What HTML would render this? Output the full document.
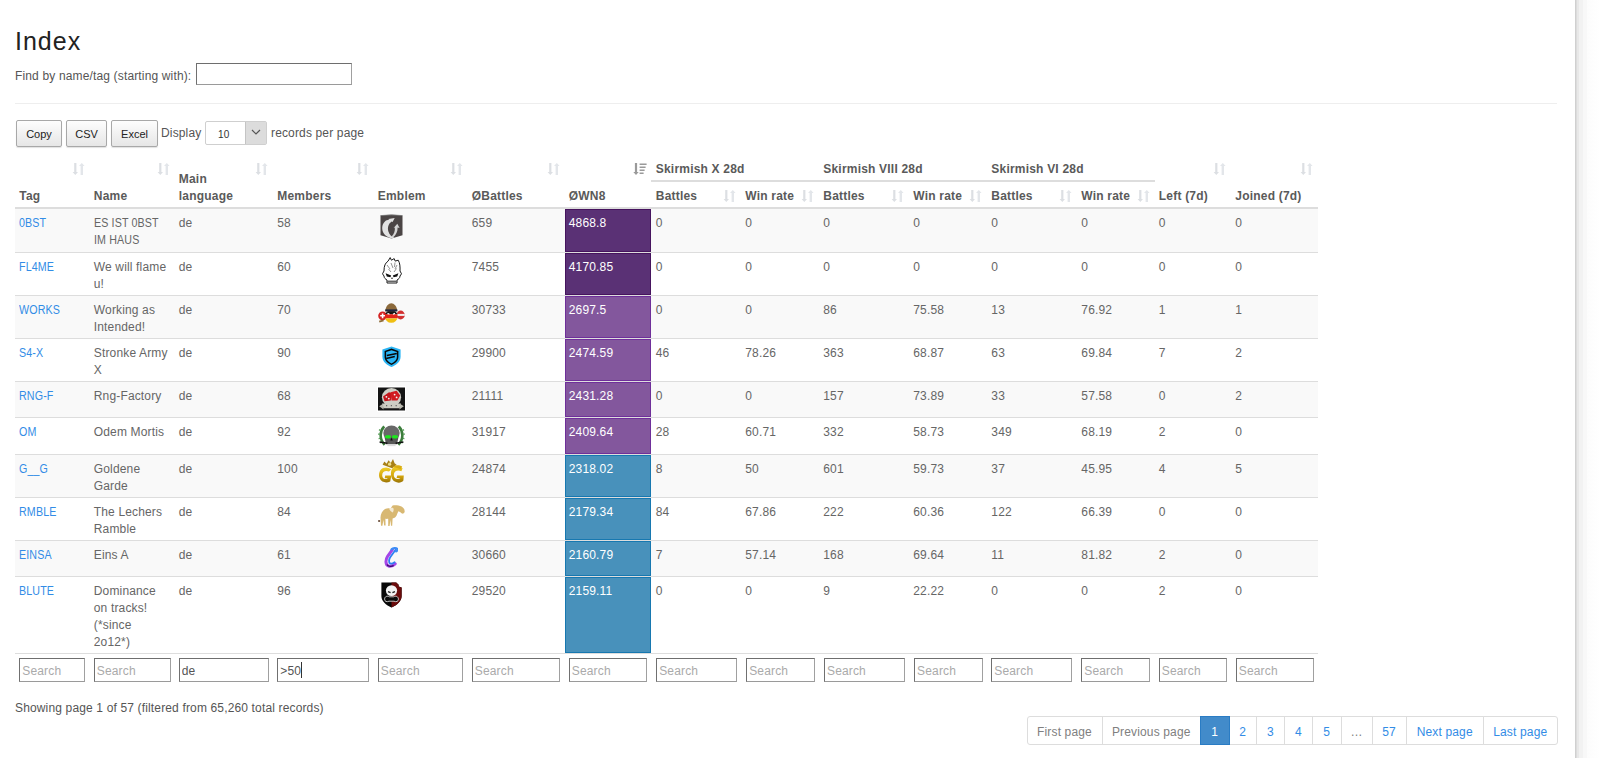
<!DOCTYPE html>
<html><head><meta charset="utf-8"><title>Index</title>
<style>
html,body{margin:0;padding:0;background:#fff;}
body{width:1600px;height:758px;overflow:hidden;position:relative;font-family:"Liberation Sans",sans-serif;font-size:12px;color:#555;letter-spacing:.15px;}
.shadow{position:absolute;left:1575px;top:0;width:25px;height:758px;background:linear-gradient(to right,#d0d0d0 0,#d0d0d0 1px,#dcdcdc 1px,#dcdcdc 2px,#e8e8e8 2px,#e8e8e8 4px,#f2f2f2 4px,#f2f2f2 8px,#f8f8f8 8px,#f8f8f8 12px,#fcfcfc 12px,#fefefe 20px,#fff 25px);}
h1{position:absolute;left:15px;top:25px;margin:0;font-weight:normal;font-size:25px;line-height:32px;color:#222;letter-spacing:1px;}
.find{position:absolute;left:15px;top:68px;line-height:17px;}
.find input{position:absolute;left:181px;top:-5px;width:156px;height:22px;}
input{box-sizing:border-box;margin:0;padding:2px 2px 0;font-family:"Liberation Sans",sans-serif;font-size:12px;letter-spacing:.15px;border:1px solid #8a8a8a;border-top-color:#6e6e6e;border-left-color:#707070;border-bottom-color:#9a9a9a;border-right-color:#a0a0a0;background:#fff;color:#555;outline:none;}
input::placeholder{color:#aaa;}
hr{position:absolute;left:15px;top:103px;width:1542px;height:0;margin:0;border:0;border-top:1px solid #eee;}
.btn{position:absolute;top:120px;height:26.5px;box-sizing:border-box;border:1px solid #a8a8a8;border-radius:2px;background:linear-gradient(#fdfdfd,#e6e6e6);font-size:11px;line-height:26px;text-align:center;color:#222;letter-spacing:0;box-shadow:0 1px 1px rgba(0,0,0,.12);}
.disp{position:absolute;top:125px;line-height:17px;}
.sel{position:absolute;left:205px;top:121px;width:62px;height:24px;box-sizing:border-box;border:1px solid #cfcfcf;border-radius:2px;background:#fff;}
.sel .v{position:absolute;left:12px;top:6px;font-size:10px;line-height:14px;color:#333;}
.sel .ar{position:absolute;right:0;top:0;width:20px;height:22px;background:#dcdcdc;border-left:1px solid #c4c4c4;}
table{position:absolute;left:15.3px;top:156px;border-collapse:separate;border-spacing:0;table-layout:fixed;width:1302.5px;}
th,td{padding:0 4px;line-height:17px;text-align:left;overflow:visible;white-space:nowrap;}
th{font-weight:bold;color:#5a5a5a;position:relative;letter-spacing:.2px;}
th.r1{height:19px;padding-top:5px;vertical-align:top;}
th.grp{border-bottom:2px solid #ddd;}
th.r2{height:19px;padding-top:6px;vertical-align:top;border-bottom:2px solid #ddd;}
th.rs{vertical-align:bottom;padding-bottom:2px;border-bottom:2px solid #ddd;}
.si{position:absolute;right:5px;top:7px;}
th.r2 .si{top:8px;}
th.wnh .si{right:3.5px;}
th.b1,td.b1{padding-left:5px;}
.caps{display:inline-block;transform:scaleX(.89);transform-origin:0 0;}
td{vertical-align:top;border-top:1px solid #ddd;padding-top:5.5px;color:#666;}
tbody tr:first-child td{border-top:0;}
tbody tr:nth-child(odd) td{background:#f9f9f9;}
td a{color:#328ce6;text-decoration:none;}
td.wn{color:#fff;}
tbody tr td.sup{background:#5a3175;box-shadow:inset 0 0 0 1px #46145e;}
tbody tr td.uni{background:#83579d;box-shadow:inset 0 0 0 1px #6f2f9a;}
tbody tr td.gr{background:#4891bb;box-shadow:inset 0 0 0 1px #1778b0;}
.emb{position:absolute;}
tfoot td{border-top:1px solid #ddd;background:#fff !important;padding-top:4px;height:32px;box-sizing:border-box;}
tfoot input{height:24px;display:block;}
.info{position:absolute;left:15px;top:700px;line-height:17px;}
.pg{position:absolute;left:0;top:716px;height:29px;}
.pg span{position:absolute;top:0;box-sizing:border-box;height:29px;line-height:31px;border:1px solid #ddd;text-align:center;color:#328ce6;background:#fff;}
.pg span.dis{color:#808080;}
.pg span.act{background:#428bca;border-color:#2a7cc4;color:#fff;z-index:2;}
.pg span:first-child{border-radius:3px 0 0 3px;}
.pg span:last-child{border-radius:0 3px 3px 0;}
</style></head><body>
<div class="shadow"></div>
<h1>Index</h1>
<div class="find">Find by name/tag (starting with): <input type="text"></div>
<hr>
<div class="btn" style="left:16px;width:46px">Copy</div>
<div class="btn" style="left:66px;width:41px">CSV</div>
<div class="btn" style="left:111px;width:47px">Excel</div>
<div class="disp" style="left:161px">Display</div>
<div class="sel"><span class="v">10</span><span class="ar"><svg width="20" height="21" viewBox="0 0 20 21"><path d="M6 8l4 4 4-4" stroke="#555" stroke-width="1.2" fill="none"/></svg></span></div>
<div class="disp" style="left:271px">records per page</div>

<table><colgroup><col style="width:74.5px"><col style="width:85px"><col style="width:98.5px"><col style="width:100.5px"><col style="width:94px"><col style="width:97px"><col style="width:86px"><col style="width:90.5px"><col style="width:78px"><col style="width:90px"><col style="width:78px"><col style="width:90px"><col style="width:77.5px"><col style="width:76.5px"><col style="width:86.5px"></colgroup>
<thead><tr>
<th class="rs" rowspan="2"><svg class="si" width="13" height="12" viewBox="0 0 13 12"><path d="M2.2 0h2.2v9h1.6L3.3 12 .6 9h1.6z" fill="#dcdfe3"/><path d="M8.6 3H7l2.8-3 2.8 3H11v9H8.6z" fill="#e3e6ea"/></svg>Tag</th>
<th class="rs" rowspan="2"><svg class="si" width="13" height="12" viewBox="0 0 13 12"><path d="M2.2 0h2.2v9h1.6L3.3 12 .6 9h1.6z" fill="#dcdfe3"/><path d="M8.6 3H7l2.8-3 2.8 3H11v9H8.6z" fill="#e3e6ea"/></svg>Name</th>
<th class="rs" rowspan="2"><svg class="si" width="13" height="12" viewBox="0 0 13 12"><path d="M2.2 0h2.2v9h1.6L3.3 12 .6 9h1.6z" fill="#dcdfe3"/><path d="M8.6 3H7l2.8-3 2.8 3H11v9H8.6z" fill="#e3e6ea"/></svg>Main<br>language</th>
<th class="rs" rowspan="2"><svg class="si" width="13" height="12" viewBox="0 0 13 12"><path d="M2.2 0h2.2v9h1.6L3.3 12 .6 9h1.6z" fill="#dcdfe3"/><path d="M8.6 3H7l2.8-3 2.8 3H11v9H8.6z" fill="#e3e6ea"/></svg>Members</th>
<th class="rs" rowspan="2"><svg class="si" width="13" height="12" viewBox="0 0 13 12"><path d="M2.2 0h2.2v9h1.6L3.3 12 .6 9h1.6z" fill="#dcdfe3"/><path d="M8.6 3H7l2.8-3 2.8 3H11v9H8.6z" fill="#e3e6ea"/></svg>Emblem</th>
<th class="rs" rowspan="2"><svg class="si" width="13" height="12" viewBox="0 0 13 12"><path d="M2.2 0h2.2v9h1.6L3.3 12 .6 9h1.6z" fill="#dcdfe3"/><path d="M8.6 3H7l2.8-3 2.8 3H11v9H8.6z" fill="#e3e6ea"/></svg>ØBattles</th>
<th class="rs wnh" rowspan="2"><svg class="si" width="14" height="12" viewBox="0 0 14 12"><path d="M1.9 0h2.2v9h1.6L3 12 .3 9h1.6z" fill="#9a9a9a"/><path d="M6.6 0.4h7v1.5h-7zM6.6 3.4h6v1.5h-6zM6.6 6.4h5v1.5h-5zM6.6 9.4h4v1.5h-4z" fill="#9a9a9a"/></svg>ØWN8</th>
<th class="r1 grp b1" colspan="2">Skirmish X 28d</th>
<th class="r1 grp" colspan="2">Skirmish VIII 28d</th>
<th class="r1 grp" colspan="2">Skirmish VI 28d</th>
<th class="rs" rowspan="2"><svg class="si" width="13" height="12" viewBox="0 0 13 12"><path d="M2.2 0h2.2v9h1.6L3.3 12 .6 9h1.6z" fill="#dcdfe3"/><path d="M8.6 3H7l2.8-3 2.8 3H11v9H8.6z" fill="#e3e6ea"/></svg>Left (7d)</th>
<th class="rs" rowspan="2"><svg class="si" width="13" height="12" viewBox="0 0 13 12"><path d="M2.2 0h2.2v9h1.6L3.3 12 .6 9h1.6z" fill="#dcdfe3"/><path d="M8.6 3H7l2.8-3 2.8 3H11v9H8.6z" fill="#e3e6ea"/></svg>Joined (7d)</th>
</tr><tr>
<th class="r2 b1"><svg class="si" width="13" height="12" viewBox="0 0 13 12"><path d="M2.2 0h2.2v9h1.6L3.3 12 .6 9h1.6z" fill="#dcdfe3"/><path d="M8.6 3H7l2.8-3 2.8 3H11v9H8.6z" fill="#e3e6ea"/></svg>Battles</th><th class="r2"><svg class="si" width="13" height="12" viewBox="0 0 13 12"><path d="M2.2 0h2.2v9h1.6L3.3 12 .6 9h1.6z" fill="#dcdfe3"/><path d="M8.6 3H7l2.8-3 2.8 3H11v9H8.6z" fill="#e3e6ea"/></svg>Win rate</th>
<th class="r2"><svg class="si" width="13" height="12" viewBox="0 0 13 12"><path d="M2.2 0h2.2v9h1.6L3.3 12 .6 9h1.6z" fill="#dcdfe3"/><path d="M8.6 3H7l2.8-3 2.8 3H11v9H8.6z" fill="#e3e6ea"/></svg>Battles</th><th class="r2"><svg class="si" width="13" height="12" viewBox="0 0 13 12"><path d="M2.2 0h2.2v9h1.6L3.3 12 .6 9h1.6z" fill="#dcdfe3"/><path d="M8.6 3H7l2.8-3 2.8 3H11v9H8.6z" fill="#e3e6ea"/></svg>Win rate</th>
<th class="r2"><svg class="si" width="13" height="12" viewBox="0 0 13 12"><path d="M2.2 0h2.2v9h1.6L3.3 12 .6 9h1.6z" fill="#dcdfe3"/><path d="M8.6 3H7l2.8-3 2.8 3H11v9H8.6z" fill="#e3e6ea"/></svg>Battles</th><th class="r2"><svg class="si" width="13" height="12" viewBox="0 0 13 12"><path d="M2.2 0h2.2v9h1.6L3.3 12 .6 9h1.6z" fill="#dcdfe3"/><path d="M8.6 3H7l2.8-3 2.8 3H11v9H8.6z" fill="#e3e6ea"/></svg>Win rate</th>
</tr></thead><tbody>
<tr style="height:43px"><td><a class="caps">0BST</a></td><td><span class="caps">ES IST 0BST</span><br><span class="caps">IM HAUS</span></td><td>de</td><td>58</td><td class="em"></td><td>659</td><td class="wn sup">4868.8</td><td class="b1">0</td><td>0</td><td>0</td><td>0</td><td>0</td><td>0</td><td>0</td><td>0</td></tr>
<tr style="height:43px"><td><a class="caps">FL4ME</a></td><td>We will flame<br>u!</td><td>de</td><td>60</td><td class="em"></td><td>7455</td><td class="wn sup">4170.85</td><td class="b1">0</td><td>0</td><td>0</td><td>0</td><td>0</td><td>0</td><td>0</td><td>0</td></tr>
<tr style="height:43px"><td><a class="caps">WORKS</a></td><td>Working as<br>Intended!</td><td>de</td><td>70</td><td class="em"></td><td>30733</td><td class="wn uni">2697.5</td><td class="b1">0</td><td>0</td><td>86</td><td>75.58</td><td>13</td><td>76.92</td><td>1</td><td>1</td></tr>
<tr style="height:43px"><td><a class="caps">S4-X</a></td><td>Stronke Army<br>X</td><td>de</td><td>90</td><td class="em"></td><td>29900</td><td class="wn uni">2474.59</td><td class="b1">46</td><td>78.26</td><td>363</td><td>68.87</td><td>63</td><td>69.84</td><td>7</td><td>2</td></tr>
<tr style="height:36px"><td><a class="caps">RNG-F</a></td><td>Rng-Factory</td><td>de</td><td>68</td><td class="em"></td><td>21111</td><td class="wn uni">2431.28</td><td class="b1">0</td><td>0</td><td>157</td><td>73.89</td><td>33</td><td>57.58</td><td>0</td><td>2</td></tr>
<tr style="height:37px"><td><a class="caps">OM</a></td><td>Odem Mortis</td><td>de</td><td>92</td><td class="em"></td><td>31917</td><td class="wn uni">2409.64</td><td class="b1">28</td><td>60.71</td><td>332</td><td>58.73</td><td>349</td><td>68.19</td><td>2</td><td>0</td></tr>
<tr style="height:43px"><td><a class="caps">G__G</a></td><td>Goldene<br>Garde</td><td>de</td><td>100</td><td class="em"></td><td>24874</td><td class="wn gr">2318.02</td><td class="b1">8</td><td>50</td><td>601</td><td>59.73</td><td>37</td><td>45.95</td><td>4</td><td>5</td></tr>
<tr style="height:43px"><td><a class="caps">RMBLE</a></td><td>The Lechers<br>Ramble</td><td>de</td><td>84</td><td class="em"></td><td>28144</td><td class="wn gr">2179.34</td><td class="b1">84</td><td>67.86</td><td>222</td><td>60.36</td><td>122</td><td>66.39</td><td>0</td><td>0</td></tr>
<tr style="height:36px"><td><a class="caps">EINSA</a></td><td>Eins A</td><td>de</td><td>61</td><td class="em"></td><td>30660</td><td class="wn gr">2160.79</td><td class="b1">7</td><td>57.14</td><td>168</td><td>69.64</td><td>11</td><td>81.82</td><td>2</td><td>0</td></tr>
<tr style="height:77px"><td><a class="caps">BLUTE</a></td><td>Dominance<br>on tracks!<br>(*since<br>2o12*)</td><td>de</td><td>96</td><td class="em"></td><td>29520</td><td class="wn gr">2159.11</td><td class="b1">0</td><td>0</td><td>9</td><td>22.22</td><td>0</td><td>0</td><td>2</td><td>0</td></tr>
</tbody><tfoot><tr>
<td><input type="text" style="width:66px;margin-left:0px" placeholder="Search"></td>
<td><input type="text" style="width:77px;margin-left:0px" placeholder="Search"></td>
<td><input type="text" style="width:90px;margin-left:0px" value="de"></td>
<td><input type="text" style="width:92px;margin-left:0px" value=">50"></td>
<td><input type="text" style="width:85px;margin-left:0px" placeholder="Search"></td>
<td><input type="text" style="width:88px;margin-left:0px" placeholder="Search"></td>
<td><input type="text" style="width:78px;margin-left:0px" placeholder="Search"></td>
<td><input type="text" style="width:81px;margin-left:1.4px" placeholder="Search"></td>
<td><input type="text" style="width:69px;margin-left:0.9px" placeholder="Search"></td>
<td><input type="text" style="width:81px;margin-left:0.7px" placeholder="Search"></td>
<td><input type="text" style="width:69px;margin-left:0.8px" placeholder="Search"></td>
<td><input type="text" style="width:81px;margin-left:0px" placeholder="Search"></td>
<td><input type="text" style="width:69px;margin-left:0px" placeholder="Search"></td>
<td><input type="text" style="width:68px;margin-left:0px" placeholder="Search"></td>
<td><input type="text" style="width:78px;margin-left:0.5px" placeholder="Search"></td>
</tr></tfoot></table>
<svg class="emb" style="left:380px;top:214px" width="23" height="25" viewBox="0 0 23 25"><path d="M0.5 1.6Q11.5 0 22.5 1.6V21.2L11.5 24.6 0.5 21.2z" fill="#4b4545"/><path d="M0.6 1.6Q11.5 0.2 22.4 1.6" stroke="#777" stroke-width=".8" fill="none"/><path d="M9.4 5.6L8.4 5 14.7 3.9 12.6 8.1 11.6 7.4C8.6 9.6 7.2 13 8.4 17.4 9.4 20.6 11.6 22.6 14.2 23.4L12.4 24.4C9 24 5 22 3 18 1.4 14 2.2 9.4 6 6.6z" fill="#e2e2e2"/><path d="M17.3 9.7L19.6 14 17.6 13.6C17.8 17.6 16 21 13 23.6L11.6 22.6C14.2 20 15.2 17 14.8 13.6L13.6 14z" fill="#d4d4d4"/></svg>
<svg class="emb" style="left:382px;top:257px" width="20" height="27" viewBox="0 0 20 27"><path d="M6 4.2L8.2 0.6 9.4 3.2 12.2 1.6 13.2 4.1 16.2 3.2C18 6 18.2 10 18 14L19.5 16.8 18 19C18 21 16.5 22.2 15 23V26H5V23C3.5 22.2 2 21 2 19L0.5 16.8 2 14C2 9 3.2 6 6 4.2z" fill="#fff" stroke="#1a1a1a" stroke-width="1"/><path d="M5 8L8 12M9 6L11 11M13 5.5L12.5 10M15 8L13 12M6.5 12L9 15M14.5 11.5L12 15" stroke="#777" stroke-width=".8"/><path d="M3.6 16.2L9.2 18.4 8.4 20.2 4.8 19.6zM16.4 16.2L10.8 18.4 11.6 20.2 15.2 19.6z" fill="#111"/><circle cx="10" cy="21.2" r=".8" fill="#222"/><path d="M5.5 24.2H14.5" stroke="#222" stroke-width="1"/></svg>
<svg class="emb" style="left:378px;top:303px" width="27" height="20" viewBox="0 0 27 20"><circle cx="4.6" cy="12.8" r="4.4" fill="#d42424"/><path d="M2.2 12.8H7M4.6 10.4V15.2" stroke="#fff" stroke-width="1.6"/><ellipse cx="22.6" cy="12" rx="4.2" ry="4.4" fill="#d23030"/><path d="M18.6 11.9H26.8" stroke="#f2f2f2" stroke-width="2"/><clipPath id="c3"><circle cx="13.3" cy="13.4" r="6.4"/></clipPath><g clip-path="url(#c3)"><rect x="6" y="6" width="15" height="5.2" fill="#151515"/><rect x="6" y="11.2" width="15" height="4.2" fill="#e0251b"/><rect x="6" y="15.4" width="15" height="6" fill="#f0bf12"/></g><path d="M7.2 8.2C7.8 3 10.6 0.3 13.3 0.3 16 0.3 18.8 3 19.4 8.2z" fill="#8c6a3c"/><rect x="7.3" y="6.4" width="12" height="2" fill="#1e2440"/><path d="M9.5 10.4l2 .8M17 10.4l-2 .8" stroke="#fff" stroke-width="1.2"/><path d="M1.2 18.6L5.6 17.4" stroke="#8e6b38" stroke-width="1.8"/></svg>
<svg class="emb" style="left:382px;top:346px" width="19" height="21" viewBox="0 0 19 21"><path d="M9.5 0.4L18.6 3.4V10.8C18.6 15.8 14.2 19 9.5 21 4.8 19 0.4 15.8 0.4 10.8V3.4z" fill="#2ab5f5"/><path d="M9.5 2.6L16.4 5V10.8C16.4 14.7 13.2 17.4 9.5 19 5.8 17.4 2.6 14.7 2.6 10.8V5z" fill="#080808"/><path d="M9.5 4.2L14.9 6.1V10.8C14.9 13.9 12.5 16 9.5 17.4 6.5 16 4.1 13.9 4.1 10.8V6.1z" fill="#2ab5f5"/><path d="M4.8 9.6L14.8 7.4M4.2 12.6L12.8 10.6" stroke="#080808" stroke-width="1.5"/></svg>
<svg class="emb" style="left:377px;top:386px" width="29" height="26" viewBox="0 0 29 26"><rect width="29" height="26" fill="#fff"/><rect x="1" y="1.5" width="27" height="23" fill="#141414"/><ellipse cx="14.5" cy="11.2" rx="9.6" ry="9.2" fill="#cfcec6"/><path d="M6 10.5L12 6.2 15.5 7.2 13.8 14.5 7.6 15.2z" fill="#c4161c"/><path d="M13.5 6.3L19.6 4.8 23.2 9.6 20.4 14.6 14.6 14.4z" fill="#d11a20"/><circle cx="9.4" cy="10.8" r=".9" fill="#f4f4f4"/><circle cx="11.8" cy="12.6" r=".9" fill="#f4f4f4"/><circle cx="17.6" cy="8.6" r=".9" fill="#f4f4f4"/><circle cx="19.6" cy="11.4" r=".9" fill="#f4f4f4"/><path d="M5 17.6H24L22.6 22.2H6.4z" fill="#cdccc2"/><path d="M2.2 20.2L6 17.8 6.6 23.4zM26.8 20.2L23 17.8 22.4 23.4z" fill="#b9b8ae"/><path d="M9 19.6h1.2M13.8 19.6h1.2M18.6 19.6h1.2" stroke="#666" stroke-width="1.2"/></svg>
<svg class="emb" style="left:378px;top:424px" width="27" height="24" viewBox="0 0 27 24"><path d="M6.2 2.4C1.6 7.4 1.2 15 6.6 20.8M20.8 2.4C25.4 7.4 25.8 15 20.4 20.8" stroke="#3c7d3c" stroke-width="2.6" fill="none"/><path d="M2.6 6.6l-1.6-1M1.8 10.4l-1.6-.4M2.2 14.4L.6 14.6M3.8 17.8l-1.6 1M24.4 6.6l1.6-1M25.2 10.4l1.6-.4M24.8 14.4l1.6.2M23.2 17.8l1.6 1" stroke="#5aa05a" stroke-width="1.4"/><ellipse cx="13.5" cy="9" rx="8.2" ry="7.6" fill="#686868"/><path d="M6.4 12.5H20.6L19 20.2H8z" fill="#575757"/><ellipse cx="10" cy="12.8" rx="3.1" ry="1.8" fill="#1ee51e"/><ellipse cx="17" cy="12.8" rx="3.1" ry="1.8" fill="#1ee51e"/><path d="M13.5 13.8L12.2 16.4H14.8z" fill="#0c0c0c"/><path d="M1.6 18L9.4 19.2M25.4 18L17.6 19.2" stroke="#111" stroke-width="1.5"/><path d="M9.4 21.6H17.6" stroke="#dcdcdc" stroke-width="1.1"/></svg>
<svg class="emb" style="left:378px;top:458px" width="27" height="27" viewBox="0 0 27 27"><defs><linearGradient id="g7" x1="0" y1="0" x2="0" y2="1"><stop offset="0" stop-color="#f0cf2a"/><stop offset=".6" stop-color="#d3a50c"/><stop offset="1" stop-color="#9a7406"/></linearGradient></defs><path d="M4.6 6.8L6.4 3.4 8.6 5.8 10.6 2.2 12.8 5 15 1 16.6 5.2 18.6 6.8 14.2 10.2z" fill="#a88016"/><circle cx="11.6" cy="6.2" r="1.6" fill="#efe08a"/><path d="M13.2 11.6C11 9.4 7.8 8.9 5 10.1 1.4 11.8 0.1 16.6 1.8 20.6 3.6 24.6 8.6 25.4 12.2 23.4L13.4 17.6H7.2L6.7 20.2H9.8C7.9 22 4.4 21.2 4.2 17.4 4 13.6 7.8 12.2 11 13.6z" fill="url(#g7)"/><path d="M24.6 10.2C22.4 8 18.8 7.6 16 9 14.4 9.8 13.6 11.4 13.2 13 12.4 16.6 13.2 21.4 16.8 23.6 19.8 25.4 23.8 24.8 25.4 22.6L25.8 17.4H19.2L18.6 20H22.4C20.4 22 15.8 21.4 15.8 17 15.8 12.6 20.2 11.6 23.4 13.2z" fill="url(#g7)"/><path d="M15.2 8.8C16.8 7.2 20.6 6.4 24.2 8.6L22.6 11.2z" fill="#d9ad12"/></svg>
<svg class="emb" style="left:378px;top:505px" width="27" height="22" viewBox="0 0 27 22"><path d="M2.5 12.5C2.5 9 4.5 5.5 7 4 9 3 11 3 12.5 3.6L14.6 0.4C17 0 21 0.2 23.5 1.4 25.5 2.4 26.8 4.6 26.7 6.6 26.5 8.4 25 9 24 8.6 23 8 22 6.6 20.4 6.2 19.6 7.8 19 9 18.6 10.4 17.8 12 16.6 13 14.6 13.4L14.2 20.8H13L12.4 15 11.6 21H10.2L10.2 13.8C9.4 14 8.2 14 7.4 13.8L7.6 20.6H6.2L5.4 15 4.4 20.8H3z" fill="#d8b872"/><path d="M11 3.6C12.4 2.6 14 2.4 15.2 3 16 4.4 15.6 6.6 14.6 7.6 13.2 7 11.8 5.2 11 3.6z" fill="#f3e9d4"/><circle cx="1.1" cy="16" r="1.1" fill="#6b4e3a"/></svg>
<svg class="emb" style="left:383px;top:547px" width="15" height="21" viewBox="0 0 15 21"><path d="M9.4 2.6L4.6 9.4C2.4 12.6 2.2 17.6 5.4 19 7.6 20 10.2 18.6 12.2 16.8" stroke="#9a32e6" stroke-width="3" fill="none" stroke-linecap="round" opacity=".9"/><path d="M12.6 2.8L7.4 10C5.8 12.4 5.6 15.4 7 16.4 8.4 17.2 10 16.4 11.6 15.2" stroke="#2e7ff2" stroke-width="1.8" fill="none" stroke-linecap="round"/><path d="M8.6 2.4C10 1 13 0.8 14.2 1.8 15 2.6 14.2 4 13 4.4" stroke="#3d8cf6" stroke-width="2.2" fill="none" stroke-linecap="round"/><path d="M4 17.4C5 19.4 8 20 10.6 18.4" stroke="#3a0a66" stroke-width="1.2" fill="none"/></svg>
<svg class="emb" style="left:381px;top:582px" width="21" height="26" viewBox="0 0 21 26"><path d="M0.4 0.4H15.2L17.6 2.8V4.6L20.6 5.6V14.2C20.6 19.2 16 23 10.5 25.6 5 23 0.4 19.2 0.4 14.2z" fill="#070707"/><path d="M10.5 0.4H15.2L17.6 2.8V4.6L20.6 5.6V14.2C20.6 19.2 16 23 10.5 25.6z" fill="#6a0b0b"/><ellipse cx="10.5" cy="8.6" rx="5.6" ry="5.4" fill="#f2f2f2"/><path d="M7 9.6l2.6 1M14 9.6l-2.6 1" stroke="#222" stroke-width="1.4"/><path d="M3.6 17.2C3.6 14.2 6.6 13.6 8.4 14.8H12.6C14.4 13.6 17.4 14.2 17.4 17.2 17.4 19.6 15.2 20.2 13 19.2H8C5.8 20.2 3.6 19.6 3.6 17.2z" fill="#090909" stroke="#d8d8d8" stroke-width=".9"/></svg>
<div style="position:absolute;left:301px;top:662px;width:1px;height:16px;background:#333"></div>
<div class="info">Showing page 1 of 57 (filtered from 65,260 total records)</div>
<div class="pg"><span class="dis" style="left:1026.5px;width:76.0px">First page</span><span class="dis" style="left:1101.5px;width:99.5px">Previous page</span><span class="act" style="left:1200px;width:29.5px">1</span><span class="" style="left:1228.5px;width:28.5px">2</span><span class="" style="left:1256px;width:29px">3</span><span class="" style="left:1284px;width:29px">4</span><span class="" style="left:1312px;width:29.5px">5</span><span class="dis" style="left:1340.5px;width:32.0px">…</span><span class="" style="left:1371.5px;width:35.0px">57</span><span class="" style="left:1405.5px;width:78.5px">Next page</span><span class="" style="left:1483px;width:74.5px">Last page</span></div>
</body></html>
